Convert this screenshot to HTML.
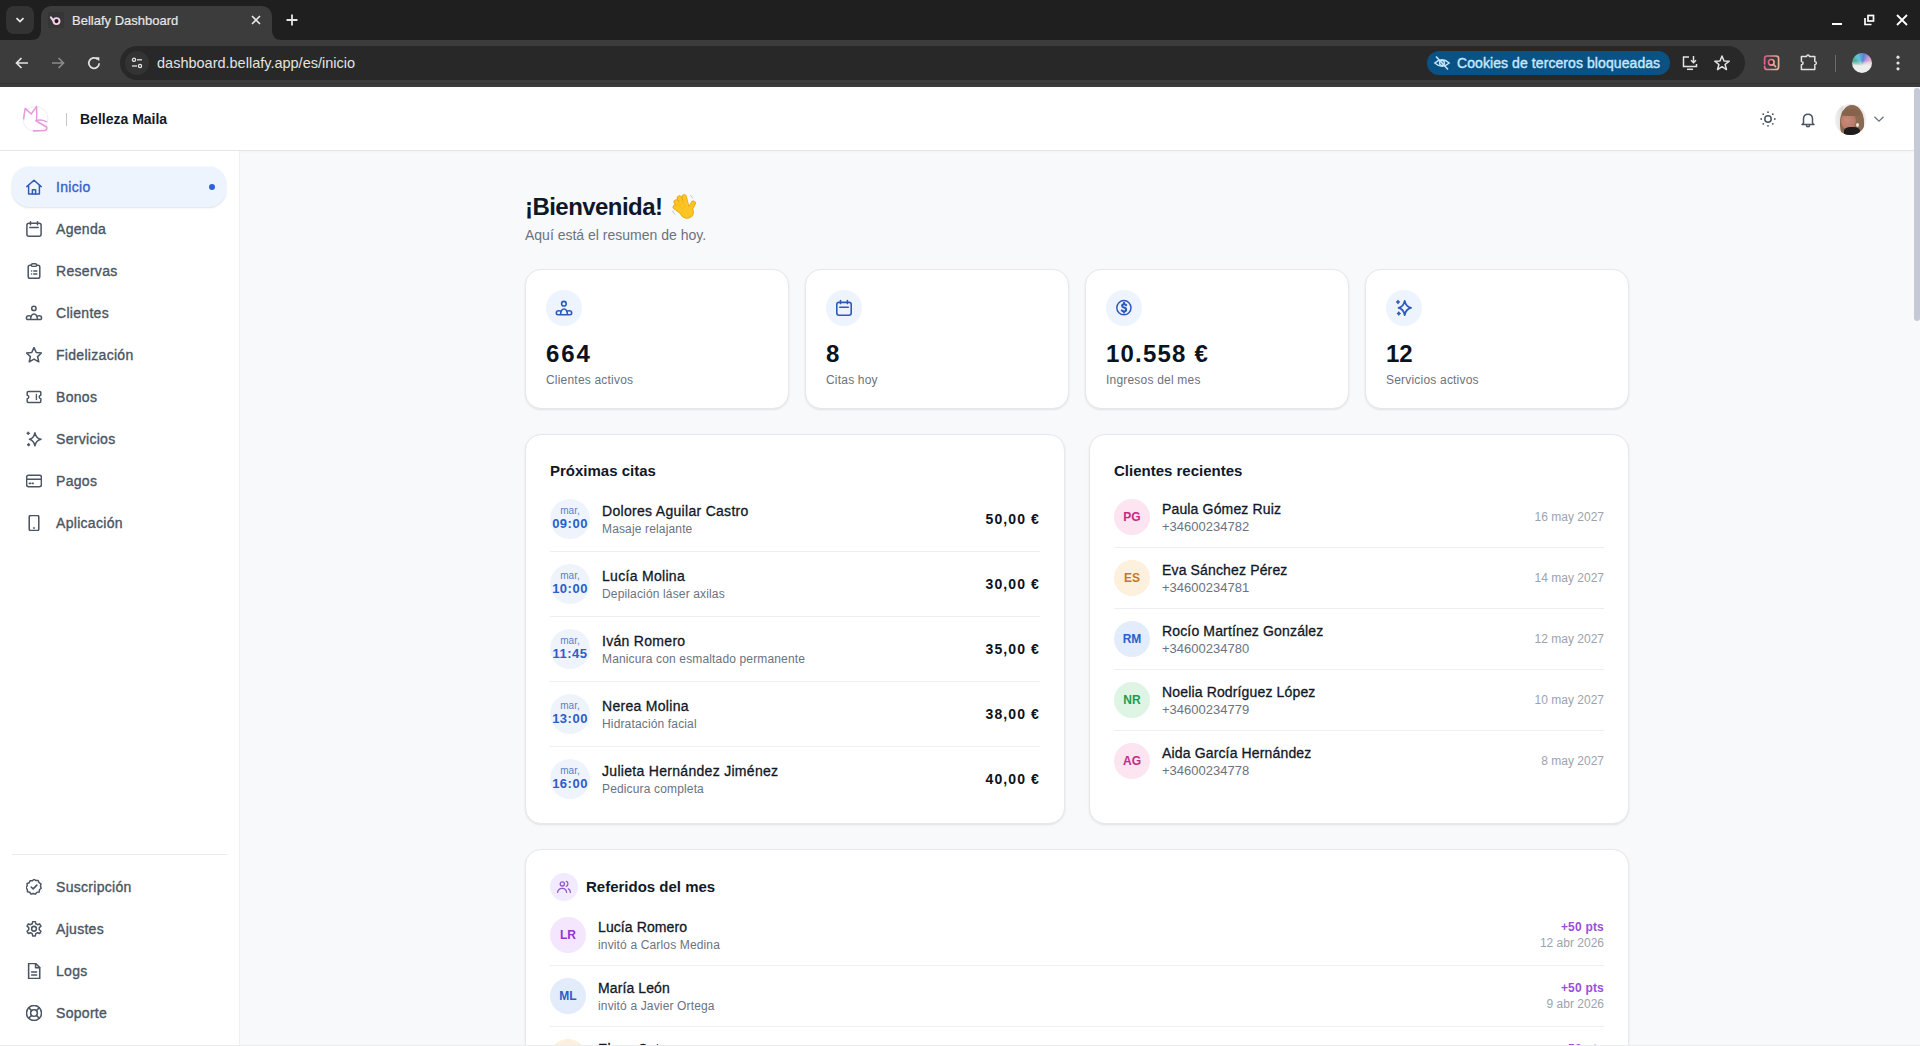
<!DOCTYPE html>
<html><head><meta charset="utf-8"><title>Bellafy Dashboard</title>
<style>
*{box-sizing:border-box;margin:0;padding:0}
html,body{width:1920px;height:1046px;overflow:hidden;background:#f8f9fb;font-family:"Liberation Sans",sans-serif}
.abs{position:absolute}
/* chrome */
#strip{position:absolute;left:0;top:0;width:1920px;height:40px;background:#1f1f1f}
#toolbar{position:absolute;left:0;top:40px;width:1920px;height:47px;background:#3c3c3c}
#tab{position:absolute;left:41px;top:6px;width:231px;height:35px;background:#3c3c3c;border-radius:10px 10px 0 0}
#omni{position:absolute;left:120px;top:46px;width:1625px;height:34px;border-radius:17px;background:#282828}
.ct{color:#e3e3e3;font-family:"Liberation Sans",sans-serif}
/* page */
#page{position:absolute;left:0;top:87px;width:1920px;height:959px;background:#f8f9fb;overflow:hidden}
#header{position:absolute;left:0;top:0;width:1914px;height:64px;background:#fff;border-bottom:1px solid #e4e6ea;box-shadow:0 1px 2px rgba(0,0,0,.03)}
#side{position:absolute;left:0;top:64px;width:240px;height:895px;background:#fff;border-right:1px solid #eceef1}
.nav{position:absolute;left:12px;width:214px;height:40px;border-radius:20px}
.nav .ic{position:absolute;left:14px;top:12px;width:17px;height:17px}
.nav .tx{position:absolute;left:44px;top:12px;font-size:14px;line-height:17px;color:#4b5563;letter-spacing:0.3px;-webkit-text-stroke:0.35px currentColor}
.card{position:absolute;background:#fff;border:1px solid #e6e8ec;border-radius:16px;box-shadow:0 1px 2px rgba(16,24,40,.06),0 1px 3px rgba(16,24,40,.04)}
.tm{-webkit-text-stroke:0.3px currentColor;letter-spacing:0.3px}
#scroll{position:absolute;left:1914px;top:0;width:6px;height:959px;background:#f8f9fb}
#thumb{position:absolute;left:1914px;top:1px;width:6px;height:233px;background:#c6c9d6;border-radius:3px}
</style></head><body>
<div id="strip"></div>
<div id="toolbar"></div>
<div class="abs" style="left:0;top:83px;width:1920px;height:1px;background:#333"></div>
<!-- tab dropdown -->
<div class="abs" style="left:6px;top:6px;width:28px;height:28px;border-radius:8px;background:#333333"></div>
<svg class="abs" style="left:14px;top:14px" width="12" height="12" viewBox="0 0 12 12"><path d="M2.5 4.2 L6 7.6 L9.5 4.2" stroke="#e8e8e8" stroke-width="1.8" fill="none"/></svg>
<!-- tab -->
<div id="tab"></div>
<svg class="abs" style="left:31px;top:30px" width="10" height="10" viewBox="0 0 10 10"><path d="M0 10 Q10 10 10 0 L10 10 Z" fill="#3c3c3c"/></svg>
<svg class="abs" style="left:272px;top:30px" width="10" height="10" viewBox="0 0 10 10"><path d="M10 10 Q0 10 0 0 L0 10 Z" fill="#3c3c3c"/></svg>
<div class="abs" style="left:48px;top:12px;width:16px;height:16px;background:#363636"></div>
<svg class="abs" style="left:48px;top:12px" width="16" height="16" viewBox="0 0 16 16"><path d="M2.9 5.3 L6 9.6" stroke="#f6d6ec" stroke-width="2" stroke-linecap="round"/><circle cx="8.5" cy="9.1" r="3" stroke="#f3d3ea" stroke-width="1.9" fill="#2b1320"/></svg>
<div class="abs ct" style="left:72px;top:13px;font-size:13px;line-height:16px;color:#e6e6e6;-webkit-text-stroke:0.2px #e6e6e6">Bellafy Dashboard</div>
<svg class="abs" style="left:250px;top:14px" width="12" height="12" viewBox="0 0 12 12"><path d="M2 2 L10 10 M10 2 L2 10" stroke="#e6e6e6" stroke-width="1.6"/></svg>
<svg class="abs" style="left:285px;top:13px" width="14" height="14" viewBox="0 0 14 14"><path d="M7 1.5 V12.5 M1.5 7 H12.5" stroke="#e6e6e6" stroke-width="1.8"/></svg>
<!-- nav buttons -->
<svg class="abs" style="left:13px;top:54px" width="18" height="18" viewBox="0 0 18 18"><path d="M15 9 H3.5 M8.5 4 L3.5 9 L8.5 14" stroke="#e3e3e3" stroke-width="1.7" fill="none"/></svg>
<svg class="abs" style="left:49px;top:54px" width="18" height="18" viewBox="0 0 18 18"><path d="M3 9 H14.5 M9.5 4 L14.5 9 L9.5 14" stroke="#8a8a8a" stroke-width="1.7" fill="none"/></svg>
<svg class="abs" style="left:85px;top:54px" width="18" height="18" viewBox="0 0 18 18"><path d="M14.2 9.2 A5.2 5.2 0 1 1 12.6 5.3" stroke="#e3e3e3" stroke-width="1.7" fill="none"/><path d="M10.2 3.2 H14.3 V7.3 Z" fill="#e3e3e3"/></svg>
<div id="omni"></div>
<div class="abs" style="left:125px;top:51px;width:24px;height:24px;border-radius:12px;background:#333"></div>
<svg class="abs" style="left:129px;top:55px" width="16" height="16" viewBox="0 0 16 16"><circle cx="5" cy="4.8" r="1.6" stroke="#e3e3e3" stroke-width="1.3" fill="none"/><path d="M8 4.8 H13" stroke="#e3e3e3" stroke-width="1.3"/><circle cx="11" cy="11" r="1.6" stroke="#e3e3e3" stroke-width="1.3" fill="none"/><path d="M3 11 H8" stroke="#e3e3e3" stroke-width="1.3"/></svg>
<div class="abs ct" style="left:157px;top:55px;font-size:14.5px;line-height:17px;color:#e3e3e3">dashboard.bellafy.app/es/inicio</div>
<!-- cookies chip -->
<div class="abs" style="left:1427px;top:51px;width:243px;height:24px;border-radius:12px;background:#0a5283"></div>
<svg class="abs" style="left:1433px;top:54px" width="18" height="18" viewBox="0 0 18 18"><path d="M1.8 9 Q9 2.5 16.2 9 Q9 15.5 1.8 9 Z" stroke="#c2e4ff" stroke-width="1.5" fill="none"/><circle cx="9" cy="9" r="2.4" stroke="#c2e4ff" stroke-width="1.5" fill="none"/><path d="M3 2.5 L15 15.5" stroke="#c2e4ff" stroke-width="1.6"/></svg>
<div class="abs ct" style="left:1457px;top:55px;font-size:14px;line-height:17px;color:#c7e7ff;-webkit-text-stroke:0.4px #c7e7ff;letter-spacing:0.08px">Cookies de terceros bloqueadas</div>
<svg class="abs" style="left:1681px;top:54px" width="18" height="18" viewBox="0 0 18 18"><path d="M8 3 H2.5 V12.5 H15.5 V10" stroke="#e3e3e3" stroke-width="1.5" fill="none"/><path d="M6 15.3 H12" stroke="#e3e3e3" stroke-width="1.5"/><path d="M12.5 2 V8.5 M10 6.2 L12.5 8.7 L15 6.2" stroke="#e3e3e3" stroke-width="1.5" fill="none"/></svg>
<svg class="abs" style="left:1713px;top:54px" width="18" height="18" viewBox="0 0 18 18"><path d="M9 2 L11 7 L16.2 7.2 L12.1 10.5 L13.5 15.6 L9 12.7 L4.5 15.6 L5.9 10.5 L1.8 7.2 L7 7 Z" stroke="#e3e3e3" stroke-width="1.5" fill="none" stroke-linejoin="round"/></svg>
<!-- extensions -->
<svg class="abs" style="left:1763px;top:54px" width="18" height="18" viewBox="0 0 18 18"><defs><linearGradient id="rg" x1="0" y1="0" x2="1" y2="0.3"><stop offset="0" stop-color="#d85a8a"/><stop offset="1" stop-color="#eab394"/></linearGradient></defs><path d="M1.6 10 V4.5 Q1.6 2 4.1 2 H13 Q15.6 2 15.6 4.5 V13 Q15.6 15.5 13 15.5 H4.1 Q1.6 15.5 1.6 13 V12.3" stroke="url(#rg)" stroke-width="1.7" fill="none" stroke-linecap="round"/><circle cx="8.3" cy="8.3" r="2.8" stroke="url(#rg)" stroke-width="1.6" fill="#3a2a30"/><path d="M10.4 10.4 L12.6 12.6" stroke="#e6a890" stroke-width="1.7" stroke-linecap="round"/></svg>
<svg class="abs" style="left:1800px;top:54px" width="18" height="18" viewBox="0 0 18 18"><path d="M1.4 2.4 H6.6 Q6.9 0.9 8 0.9 Q9.1 0.9 9.4 2.4 H14.8 V7.4 Q16.4 7.7 16.4 9.1 Q16.4 10.5 14.8 10.8 V15.4 H1.4 V10.8 Q3.1 10.5 3.1 9.1 Q3.1 7.7 1.4 7.4 Z" stroke="#e3e3e3" stroke-width="1.5" fill="none" stroke-linejoin="round"/></svg>
<div class="abs" style="left:1835px;top:55px;width:1px;height:17px;background:#6a6a6a"></div>
<div class="abs" style="left:1852px;top:53px;width:20px;height:20px;border-radius:10px;background:linear-gradient(180deg,rgba(240,240,240,0) 38%,rgba(238,238,238,.96) 64%),conic-gradient(from 250deg at 50% 62%,#e8f7ef 0deg,#3f9d72 35deg,#62c6dc 85deg,#5a82d2 120deg,#c49ad8 150deg,#f0c6c6 185deg,#ececec 215deg,#ececec 330deg,#e8f7ef 360deg)"></div>
<svg class="abs" style="left:1889px;top:54px" width="18" height="18" viewBox="0 0 18 18"><circle cx="9" cy="3.2" r="1.6" fill="#e3e3e3"/><circle cx="9" cy="9" r="1.6" fill="#e3e3e3"/><circle cx="9" cy="14.8" r="1.6" fill="#e3e3e3"/></svg>
<!-- window controls -->
<div class="abs" style="left:1832px;top:23px;width:10px;height:2px;background:#fff"></div>
<svg class="abs" style="left:1862px;top:13px" width="14" height="14" viewBox="0 0 14 14"><path d="M3 5 V11.5 H9.5" stroke="#fff" stroke-width="1.7" fill="none"/><rect x="6" y="2.5" width="5.5" height="5.5" stroke="#fff" stroke-width="1.7" fill="none"/></svg>
<svg class="abs" style="left:1895px;top:13px" width="14" height="14" viewBox="0 0 14 14"><path d="M2 2 L12 12 M12 2 L2 12" stroke="#fff" stroke-width="1.8"/></svg>

<div id="page">
  <div id="header">
    <svg class="abs" style="left:20px;top:16px" width="32" height="32" viewBox="0 0 32 32"><circle cx="15.5" cy="16" r="12.5" stroke="#f0ecf1" stroke-width="1" fill="none"/><path d="M3.7 15.8 Q4.3 10 5.2 5.4 L11.2 11 L16.5 3.6 Q16.9 10 16.6 17.2" stroke="#e79ad9" stroke-width="1.5" fill="none" stroke-linecap="round" stroke-linejoin="round"/><path d="M26.3 18.6 Q21 16 15.8 17.7 L26.6 24 Q27.5 27.2 24 27.5 L13.6 27.9" stroke="#e79ad9" stroke-width="1.6" fill="none" stroke-linecap="round" stroke-linejoin="round"/></svg>
    <div class="abs" style="left:65.5px;top:26px;width:1.2px;height:13px;background:#c6c6c6"></div>
    <div class="abs" style="left:80px;top:24px;font-size:14px;line-height:17px;font-weight:bold;color:#111827">Belleza Maila</div>
  </div>
  <div id="side">
<div class="nav" style="top:16px;background:#edf4fd;border-radius:17px;box-shadow:0 1px 2px rgba(20,30,60,.10),0 0 0 1px rgba(20,40,80,.025)"><div class="ic" style="left:14px;top:12px"><svg width="16" height="16" viewBox="0 0 16 16" style="display:block;overflow:visible"><path d="M0.8 7.6 L8 1.2 L15.2 7.6 M2.6 6.2 V15 H13.4 V6.2" stroke="#2f5cb5" stroke-width="1.5" fill="none" stroke-linecap="round" stroke-linejoin="round"/><path d="M6.4 15 V10.8 H9.6 V15" stroke="#2f5cb5" stroke-width="1.5" fill="none" stroke-linecap="round" stroke-linejoin="round"/></svg></div><div class="tx" style="color:#3563c4">Inicio</div><div class="abs" style="left:197px;top:17px;width:6px;height:6px;border-radius:3px;background:#2f62d8"></div></div>
<div class="nav" style="top:58px"><div class="ic"><svg width="16" height="16" viewBox="0 0 16 16" style="display:block;overflow:visible"><rect x="0.9" y="2.3" width="14.2" height="12.9" rx="2" stroke="#4b5563" stroke-width="1.5" fill="none" stroke-linecap="round" stroke-linejoin="round"/><path d="M4.5 0.7 V3.7 M11.5 0.7 V3.7 M3.8 6.6 H12.2" stroke="#4b5563" stroke-width="1.5" fill="none" stroke-linecap="round" stroke-linejoin="round"/></svg></div><div class="tx">Agenda</div></div>
<div class="nav" style="top:100px"><div class="ic"><svg width="16" height="16" viewBox="0 0 16 16" style="display:block;overflow:visible"><rect x="2.2" y="2.2" width="11.6" height="13" rx="1.8" stroke="#4b5563" stroke-width="1.5" fill="none" stroke-linecap="round" stroke-linejoin="round"/><rect x="5.5" y="0.8" width="5" height="2.6" rx="1" stroke="#4b5563" stroke-width="1.4" fill="#fff"/><circle cx="5.6" cy="8" r="0.8" fill="#4b5563"/><circle cx="5.6" cy="11" r="0.8" fill="#4b5563"/><path d="M7.8 8 H10.8 M7.8 11 H10.8" stroke="#4b5563" stroke-width="1.5" fill="none" stroke-linecap="round" stroke-linejoin="round"/></svg></div><div class="tx">Reservas</div></div>
<div class="nav" style="top:142px"><div class="ic"><svg width="16" height="16" viewBox="0 0 16 16" style="display:block;overflow:visible"><circle cx="7.9" cy="3.4" r="2.2" stroke="#4b5563" stroke-width="1.5" fill="none" stroke-linecap="round" stroke-linejoin="round"/><path d="M4.6 11.1 Q3.8 10.8 3 10.8 Q0.4 10.8 0.4 13 Q0.4 14.6 2.3 14.6 H13.7 Q15.6 14.6 15.6 13 Q15.6 10.8 13 10.8 Q12.2 10.8 11.4 11.1 M4.5 14.6 Q5 9 8 9 Q11 9 11.5 14.6" stroke="#4b5563" stroke-width="1.5" fill="none" stroke-linecap="round" stroke-linejoin="round"/></svg></div><div class="tx">Clientes</div></div>
<div class="nav" style="top:184px"><div class="ic"><svg width="16" height="16" viewBox="1.3 1.3 13.4 13.4" style="color:#4b5563;display:block"><path d="M8 1.8 L9.9 5.9 L14.3 6.3 L11 9.3 L12 13.7 L8 11.4 L4 13.7 L5 9.3 L1.7 6.3 L6.1 5.9 Z" stroke="currentColor" stroke-width="1.3" fill="none" stroke-linecap="round" stroke-linejoin="round"/></svg></div><div class="tx">Fidelización</div></div>
<div class="nav" style="top:226px"><div class="ic"><svg width="16" height="16" viewBox="0 0 16 16" style="display:block;overflow:visible"><path d="M1.2 3.6 Q1.2 2.6 2.2 2.6 H13.8 Q14.8 2.6 14.8 3.6 V6.3 Q13.2 6.6 13.2 8 Q13.2 9.4 14.8 9.7 V12.4 Q14.8 13.4 13.8 13.4 H2.2 Q1.2 13.4 1.2 12.4 V9.7 Q2.8 9.4 2.8 8 Q2.8 6.6 1.2 6.3 Z" stroke="#4b5563" stroke-width="1.5" fill="none" stroke-linecap="round" stroke-linejoin="round"/><path d="M10.4 5.4 V6.2 M10.4 7.6 V8.4 M10.4 9.8 V10.6" stroke="#4b5563" stroke-width="1.5" fill="none" stroke-linecap="round" stroke-linejoin="round"/></svg></div><div class="tx">Bonos</div></div>
<div class="nav" style="top:268px"><div class="ic"><svg width="16" height="16" viewBox="0 0 16 16" style="display:block;overflow:visible"><path d="M8.9 1.8 Q10 7.1 15 8.3 Q10 9.5 8.9 14.8 Q7.8 9.5 3.4 8.3 Q7.8 7.1 8.9 1.8 Z" stroke="#4b5563" stroke-width="1.5" fill="none" stroke-linecap="round" stroke-linejoin="round"/><path d="M2.2 0.8 Q2.5 2 3.7 2.3 Q2.5 2.6 2.2 3.8 Q1.9 2.6 0.7 2.3 Q1.9 2 2.2 0.8 Z" stroke="#4b5563" stroke-width="1" fill="#4b5563" stroke-linejoin="round"/><path d="M2.6 12.2 Q2.9 13.4 4.1 13.7 Q2.9 14 2.6 15.2 Q2.3 14 1.1 13.7 Q2.3 13.4 2.6 12.2 Z" stroke="#4b5563" stroke-width="1" fill="#4b5563" stroke-linejoin="round"/></svg></div><div class="tx">Servicios</div></div>
<div class="nav" style="top:310px"><div class="ic"><svg width="16" height="16" viewBox="1.3 1.3 13.4 13.4" style="color:#4b5563;display:block"><rect x="1.8" y="3.2" width="12.4" height="9.6" rx="1.6" stroke="currentColor" stroke-width="1.3" fill="none" stroke-linecap="round" stroke-linejoin="round"/><path d="M1.8 6.5 H14.2 M4.2 10 H5 M6.5 10 H7.3" stroke="currentColor" stroke-width="1.3" fill="none" stroke-linecap="round" stroke-linejoin="round"/></svg></div><div class="tx">Pagos</div></div>
<div class="nav" style="top:352px"><div class="ic"><svg width="16" height="16" viewBox="1.3 1.3 13.4 13.4" style="color:#4b5563;display:block"><rect x="4" y="1.6" width="8" height="12.8" rx="1.4" stroke="currentColor" stroke-width="1.3" fill="none" stroke-linecap="round" stroke-linejoin="round"/><path d="M7.7 12.2 H8.3" stroke="currentColor" stroke-width="1.3" fill="none" stroke-linecap="round" stroke-linejoin="round"/></svg></div><div class="tx">Aplicación</div></div>
<div class="nav" style="top:716px"><div class="ic"><svg width="16" height="16" viewBox="1.3 1.3 13.4 13.4" style="color:#4b5563;display:block"><path d="M8 1.5 L9.6 2.6 L11.5 2.5 L12.2 4.3 L13.8 5.3 L13.4 7.2 L14 9 L12.6 10.3 L12.3 12.2 L10.4 12.5 L9.1 14 L7.3 13.4 L5.5 14 L4.4 12.4 L2.5 12 L2.4 10.1 L1.2 8.6 L2.3 7 L2.2 5.1 L4 4.4 L4.8 2.7 L6.7 2.8 Z" stroke="currentColor" stroke-width="1.25" fill="none" stroke-linejoin="round"/><path d="M5.6 8 L7.3 9.6 L10.4 6.4" stroke="currentColor" stroke-width="1.3" fill="none" stroke-linecap="round" stroke-linejoin="round"/></svg></div><div class="tx">Suscripción</div></div>
<div class="nav" style="top:758px"><div class="ic"><svg width="16" height="16" viewBox="1.3 1.3 13.4 13.4" style="color:#4b5563;display:block"><path d="M6.9 1.8 H9.1 L9.5 3.6 L11 4.4 L12.7 3.7 L13.8 5.6 L12.4 6.8 V8.6 L13.8 9.9 L12.7 11.8 L11 11.1 L9.5 11.9 L9.1 13.8 H6.9 L6.5 11.9 L5 11.1 L3.3 11.8 L2.2 9.9 L3.6 8.6 V6.8 L2.2 5.6 L3.3 3.7 L5 4.4 L6.5 3.6 Z" stroke="currentColor" stroke-width="1.25" fill="none" stroke-linejoin="round"/><circle cx="8" cy="7.8" r="2" stroke="currentColor" stroke-width="1.3" fill="none" stroke-linecap="round" stroke-linejoin="round"/></svg></div><div class="tx">Ajustes</div></div>
<div class="nav" style="top:800px"><div class="ic"><svg width="16" height="16" viewBox="1.3 1.3 13.4 13.4" style="color:#4b5563;display:block"><path d="M3.5 1.8 H9.5 L12.8 5.1 V14.2 H3.5 Z" stroke="currentColor" stroke-width="1.3" fill="none" stroke-linecap="round" stroke-linejoin="round"/><path d="M9.3 1.8 V5.3 H12.8 M6 8.8 H10.2 M6 11.3 H10.2" stroke="currentColor" stroke-width="1.3" fill="none" stroke-linecap="round" stroke-linejoin="round"/></svg></div><div class="tx">Logs</div></div>
<div class="nav" style="top:842px"><div class="ic"><svg width="16" height="16" viewBox="1.3 1.3 13.4 13.4" style="color:#4b5563;display:block"><circle cx="8" cy="8" r="6.3" stroke="currentColor" stroke-width="1.3" fill="none" stroke-linecap="round" stroke-linejoin="round"/><circle cx="8" cy="8" r="2.8" stroke="currentColor" stroke-width="1.3" fill="none" stroke-linecap="round" stroke-linejoin="round"/><path d="M3.6 3.6 L6 6 M12.4 3.6 L10 6 M3.6 12.4 L6 10 M12.4 12.4 L10 10" stroke="currentColor" stroke-width="1.3" fill="none" stroke-linecap="round" stroke-linejoin="round"/></svg></div><div class="tx">Soporte</div></div>
<div class="abs" style="left:12px;top:703px;width:215px;height:1px;background:#e8eaee"></div>
</div>
  <div class="abs" style="left:525px;top:106px;font-size:24px;line-height:28px;font-weight:bold;color:#0f172a;letter-spacing:-0.55px">¡Bienvenida!</div>
  <svg class="abs" style="left:671px;top:106px" width="26" height="26" viewBox="0 0 26 26"><path d="M19.5 2.5 Q21.2 3.3 21.6 5" stroke="#b9c3cf" stroke-width="1" fill="none" stroke-linecap="round"/><path d="M1.8 18 Q2.2 20 3.8 21.2" stroke="#b9c3cf" stroke-width="1" fill="none" stroke-linecap="round"/><path d="M16 15 L13.3 3.8" stroke="#e2a40d" stroke-width="5.2" stroke-linecap="round"/><path d="M14 16 L8.4 5" stroke="#e2a40d" stroke-width="5.2" stroke-linecap="round"/><path d="M12.5 17.5 L5.2 9" stroke="#e2a40d" stroke-width="5.2" stroke-linecap="round"/><path d="M11.5 19.5 L4.3 14" stroke="#e2a40d" stroke-width="5.2" stroke-linecap="round"/><path d="M17.5 19 L22.3 10.2" stroke="#e2a40d" stroke-width="5.2" stroke-linecap="round"/><ellipse cx="16" cy="19.2" rx="6.9" ry="6.6" fill="#e2a40d"/><path d="M16 15 L13.3 3.8" stroke="#fcc523" stroke-width="3.8" stroke-linecap="round"/><path d="M14 16 L8.4 5" stroke="#fcc523" stroke-width="3.8" stroke-linecap="round"/><path d="M12.5 17.5 L5.2 9" stroke="#fcc523" stroke-width="3.8" stroke-linecap="round"/><path d="M11.5 19.5 L4.3 14" stroke="#fcc523" stroke-width="3.8" stroke-linecap="round"/><path d="M17.5 19 L22.3 10.2" stroke="#fcc523" stroke-width="3.8" stroke-linecap="round"/><ellipse cx="16" cy="19.2" rx="6.2" ry="5.9" fill="#fcc523"/><path d="M10 7 L14.5 14 M6.5 10.5 L12 16.5" stroke="#eab020" stroke-width="0.6"/></svg>
  <div class="abs" style="left:525px;top:140px;font-size:14px;line-height:17px;color:#6b7280">Aquí está el resumen de hoy.</div>
  <div class="card" style="left:525px;top:182px;width:264px;height:140px"></div>
  <div class="abs" style="left:546px;top:203px;width:36px;height:36px;border-radius:18px;background:#eef4fd"></div>
  <div class="abs" style="left:556px;top:213px"><svg width="16" height="16" viewBox="0 0 16 16" style="display:block;overflow:visible"><circle cx="7.9" cy="3.7" r="2.3" stroke="#2d5bb9" stroke-width="1.6" fill="none" stroke-linecap="round" stroke-linejoin="round"/><path d="M4.6 11.1 Q3.8 10.8 3 10.8 Q0.3 10.8 0.3 13 Q0.3 14.7 2.3 14.7 H13.7 Q15.7 14.7 15.7 13 Q15.7 10.8 13 10.8 Q12.2 10.8 11.4 11.1 M4.5 14.7 Q5 9 8 9 Q11 9 11.5 14.7" stroke="#2d5bb9" stroke-width="1.6" fill="none" stroke-linecap="round" stroke-linejoin="round"/></svg></div>
  <div class="abs" style="left:546px;top:253px;font-size:24px;line-height:28px;font-weight:bold;color:#0b1220;letter-spacing:1.9px">664</div>
  <div class="abs" style="left:546px;top:286px;font-size:12px;line-height:15px;color:#6b7280;letter-spacing:0.2px">Clientes activos</div>
  <div class="card" style="left:805px;top:182px;width:264px;height:140px"></div>
  <div class="abs" style="left:826px;top:203px;width:36px;height:36px;border-radius:18px;background:#eef4fd"></div>
  <div class="abs" style="left:836px;top:213px"><svg width="16" height="16" viewBox="0 0 16 16" style="display:block;overflow:visible"><rect x="0.8" y="2.4" width="14.4" height="12.8" rx="2.2" stroke="#2d5bb9" stroke-width="1.6" fill="none" stroke-linecap="round" stroke-linejoin="round"/><path d="M4.5 0.6 V3.6 M11.4 0.6 V3.6 M3.8 7.3 H12.3" stroke="#2d5bb9" stroke-width="1.6" fill="none" stroke-linecap="round" stroke-linejoin="round"/></svg></div>
  <div class="abs" style="left:826px;top:253px;font-size:24px;line-height:28px;font-weight:bold;color:#0b1220;letter-spacing:1.5px">8</div>
  <div class="abs" style="left:826px;top:286px;font-size:12px;line-height:15px;color:#6b7280;letter-spacing:0.2px">Citas hoy</div>
  <div class="card" style="left:1085px;top:182px;width:264px;height:140px"></div>
  <div class="abs" style="left:1106px;top:203px;width:36px;height:36px;border-radius:18px;background:#eef4fd"></div>
  <div class="abs" style="left:1116px;top:213px"><svg width="16" height="16" viewBox="0 0 16 16" style="display:block;overflow:visible"><circle cx="7.9" cy="7.7" r="7.1" stroke="#2d5bb9" stroke-width="1.5" fill="none"/><path d="M10.2 5.2 Q9.5 4.2 8 4.2 Q6.1 4.2 6.1 5.8 Q6.1 7.1 8 7.5 Q10.1 7.9 10.1 9.8 Q10.1 11.4 8 11.4 Q6.5 11.4 5.8 10.4 M8 2.8 V4 M8 11.6 V12.6" stroke="#2d5bb9" stroke-width="2.1" fill="none" stroke-linecap="round"/></svg></div>
  <div class="abs" style="left:1106px;top:253px;font-size:24px;line-height:28px;font-weight:bold;color:#0b1220;letter-spacing:1.2px">10.558 €</div>
  <div class="abs" style="left:1106px;top:286px;font-size:12px;line-height:15px;color:#6b7280;letter-spacing:0.2px">Ingresos del mes</div>
  <div class="card" style="left:1365px;top:182px;width:264px;height:140px"></div>
  <div class="abs" style="left:1386px;top:203px;width:36px;height:36px;border-radius:18px;background:#eef4fd"></div>
  <div class="abs" style="left:1396px;top:213px"><svg width="16" height="16" viewBox="0 0 16 16" style="display:block;overflow:visible"><path d="M8.7 0.9 Q9.9 6.7 15 7.9 Q9.9 9.1 8.7 15 Q7.5 9.1 2.6 7.9 Q7.5 6.7 8.7 0.9 Z" stroke="#2d5bb9" stroke-width="1.8" fill="none" stroke-linecap="round" stroke-linejoin="round"/><path d="M2 0.4 Q2.3 1.7 3.6 2 Q2.3 2.3 2 3.6 Q1.7 2.3 0.4 2 Q1.7 1.7 2 0.4 Z" stroke="#2d5bb9" stroke-width="1.1" fill="#2d5bb9" stroke-linejoin="round"/><path d="M2.8 11.9 Q3.1 13.2 4.4 13.5 Q3.1 13.8 2.8 15.1 Q2.5 13.8 1.2 13.5 Q2.5 13.2 2.8 11.9 Z" stroke="#2d5bb9" stroke-width="1.1" fill="#2d5bb9" stroke-linejoin="round"/></svg></div>
  <div class="abs" style="left:1386px;top:253px;font-size:24px;line-height:28px;font-weight:bold;color:#0b1220;letter-spacing:0px">12</div>
  <div class="abs" style="left:1386px;top:286px;font-size:12px;line-height:15px;color:#6b7280;letter-spacing:0.2px">Servicios activos</div>
  <div class="card" style="left:525px;top:347px;width:540px;height:390px"></div>
  <div class="card" style="left:1089px;top:347px;width:540px;height:390px"></div>
  <div class="abs" style="left:550px;top:375px;font-size:15px;line-height:18px;font-weight:bold;color:#111827">Próximas citas</div>
  <div class="abs" style="left:1114px;top:375px;font-size:15px;line-height:18px;font-weight:bold;color:#111827">Clientes recientes</div>
  <div class="abs" style="left:550px;top:412px;width:40px;height:40px;border-radius:20px;background:#eff4fc"></div>
  <div class="abs" style="left:550px;top:418px;width:40px;text-align:center;font-size:10px;line-height:12px;color:#5a7fc9">mar,</div>
  <div class="abs" style="left:550px;top:429px;width:40px;text-align:center;font-size:13px;line-height:15px;font-weight:bold;color:#2c5dc8;letter-spacing:0.5px">09:00</div>
  <div class="abs tm" style="left:602px;top:416px;font-size:14px;line-height:17px;color:#111827">Dolores Aguilar Castro</div>
  <div class="abs" style="left:602px;top:435px;font-size:12px;line-height:15px;color:#6b7280;letter-spacing:0.15px">Masaje relajante</div>
  <div class="abs" style="left:840px;top:424px;width:200px;text-align:right;font-size:14px;line-height:17px;font-weight:bold;color:#0b1220;letter-spacing:1.1px">50,00 €</div>
  <div class="abs" style="left:550px;top:464px;width:490px;height:1px;background:#eceef2"></div>
  <div class="abs" style="left:550px;top:477px;width:40px;height:40px;border-radius:20px;background:#eff4fc"></div>
  <div class="abs" style="left:550px;top:483px;width:40px;text-align:center;font-size:10px;line-height:12px;color:#5a7fc9">mar,</div>
  <div class="abs" style="left:550px;top:494px;width:40px;text-align:center;font-size:13px;line-height:15px;font-weight:bold;color:#2c5dc8;letter-spacing:0.5px">10:00</div>
  <div class="abs tm" style="left:602px;top:481px;font-size:14px;line-height:17px;color:#111827">Lucía Molina</div>
  <div class="abs" style="left:602px;top:500px;font-size:12px;line-height:15px;color:#6b7280;letter-spacing:0.15px">Depilación láser axilas</div>
  <div class="abs" style="left:840px;top:489px;width:200px;text-align:right;font-size:14px;line-height:17px;font-weight:bold;color:#0b1220;letter-spacing:1.1px">30,00 €</div>
  <div class="abs" style="left:550px;top:529px;width:490px;height:1px;background:#eceef2"></div>
  <div class="abs" style="left:550px;top:542px;width:40px;height:40px;border-radius:20px;background:#eff4fc"></div>
  <div class="abs" style="left:550px;top:548px;width:40px;text-align:center;font-size:10px;line-height:12px;color:#5a7fc9">mar,</div>
  <div class="abs" style="left:550px;top:559px;width:40px;text-align:center;font-size:13px;line-height:15px;font-weight:bold;color:#2c5dc8;letter-spacing:0.5px">11:45</div>
  <div class="abs tm" style="left:602px;top:546px;font-size:14px;line-height:17px;color:#111827">Iván Romero</div>
  <div class="abs" style="left:602px;top:565px;font-size:12px;line-height:15px;color:#6b7280;letter-spacing:0.15px">Manicura con esmaltado permanente</div>
  <div class="abs" style="left:840px;top:554px;width:200px;text-align:right;font-size:14px;line-height:17px;font-weight:bold;color:#0b1220;letter-spacing:1.1px">35,00 €</div>
  <div class="abs" style="left:550px;top:594px;width:490px;height:1px;background:#eceef2"></div>
  <div class="abs" style="left:550px;top:607px;width:40px;height:40px;border-radius:20px;background:#eff4fc"></div>
  <div class="abs" style="left:550px;top:613px;width:40px;text-align:center;font-size:10px;line-height:12px;color:#5a7fc9">mar,</div>
  <div class="abs" style="left:550px;top:624px;width:40px;text-align:center;font-size:13px;line-height:15px;font-weight:bold;color:#2c5dc8;letter-spacing:0.5px">13:00</div>
  <div class="abs tm" style="left:602px;top:611px;font-size:14px;line-height:17px;color:#111827">Nerea Molina</div>
  <div class="abs" style="left:602px;top:630px;font-size:12px;line-height:15px;color:#6b7280;letter-spacing:0.15px">Hidratación facial</div>
  <div class="abs" style="left:840px;top:619px;width:200px;text-align:right;font-size:14px;line-height:17px;font-weight:bold;color:#0b1220;letter-spacing:1.1px">38,00 €</div>
  <div class="abs" style="left:550px;top:659px;width:490px;height:1px;background:#eceef2"></div>
  <div class="abs" style="left:550px;top:672px;width:40px;height:40px;border-radius:20px;background:#eff4fc"></div>
  <div class="abs" style="left:550px;top:678px;width:40px;text-align:center;font-size:10px;line-height:12px;color:#5a7fc9">mar,</div>
  <div class="abs" style="left:550px;top:689px;width:40px;text-align:center;font-size:13px;line-height:15px;font-weight:bold;color:#2c5dc8;letter-spacing:0.5px">16:00</div>
  <div class="abs tm" style="left:602px;top:676px;font-size:14px;line-height:17px;color:#111827">Julieta Hernández Jiménez</div>
  <div class="abs" style="left:602px;top:695px;font-size:12px;line-height:15px;color:#6b7280;letter-spacing:0.15px">Pedicura completa</div>
  <div class="abs" style="left:840px;top:684px;width:200px;text-align:right;font-size:14px;line-height:17px;font-weight:bold;color:#0b1220;letter-spacing:1.1px">40,00 €</div>
  <div class="abs" style="left:1114px;top:412px;width:36px;height:36px;border-radius:18px;background:#fce4f1;color:#c52a82;text-align:center;font-size:12px;line-height:36px;font-weight:bold">PG</div>
  <div class="abs tm" style="left:1162px;top:414px;letter-spacing:0.15px;font-size:14px;line-height:17px;color:#111827">Paula Gómez Ruiz</div>
  <div class="abs" style="left:1162px;top:432px;font-size:13px;line-height:15px;color:#6b7280">+34600234782</div>
  <div class="abs" style="left:1404px;top:423px;width:200px;text-align:right;font-size:12px;line-height:15px;color:#9ca3af">16 may 2027</div>
  <div class="abs" style="left:1114px;top:460px;width:490px;height:1px;background:#eceef2"></div>
  <div class="abs" style="left:1114px;top:473px;width:36px;height:36px;border-radius:18px;background:#fdf0dc;color:#c7791a;text-align:center;font-size:12px;line-height:36px;font-weight:bold">ES</div>
  <div class="abs tm" style="left:1162px;top:475px;letter-spacing:0.15px;font-size:14px;line-height:17px;color:#111827">Eva Sánchez Pérez</div>
  <div class="abs" style="left:1162px;top:493px;font-size:13px;line-height:15px;color:#6b7280">+34600234781</div>
  <div class="abs" style="left:1404px;top:484px;width:200px;text-align:right;font-size:12px;line-height:15px;color:#9ca3af">14 may 2027</div>
  <div class="abs" style="left:1114px;top:521px;width:490px;height:1px;background:#eceef2"></div>
  <div class="abs" style="left:1114px;top:534px;width:36px;height:36px;border-radius:18px;background:#e3ecfb;color:#2a5fc9;text-align:center;font-size:12px;line-height:36px;font-weight:bold">RM</div>
  <div class="abs tm" style="left:1162px;top:536px;letter-spacing:0.15px;font-size:14px;line-height:17px;color:#111827">Rocío Martínez González</div>
  <div class="abs" style="left:1162px;top:554px;font-size:13px;line-height:15px;color:#6b7280">+34600234780</div>
  <div class="abs" style="left:1404px;top:545px;width:200px;text-align:right;font-size:12px;line-height:15px;color:#9ca3af">12 may 2027</div>
  <div class="abs" style="left:1114px;top:582px;width:490px;height:1px;background:#eceef2"></div>
  <div class="abs" style="left:1114px;top:595px;width:36px;height:36px;border-radius:18px;background:#def5e6;color:#1f9a4e;text-align:center;font-size:12px;line-height:36px;font-weight:bold">NR</div>
  <div class="abs tm" style="left:1162px;top:597px;letter-spacing:0.15px;font-size:14px;line-height:17px;color:#111827">Noelia Rodríguez López</div>
  <div class="abs" style="left:1162px;top:615px;font-size:13px;line-height:15px;color:#6b7280">+34600234779</div>
  <div class="abs" style="left:1404px;top:606px;width:200px;text-align:right;font-size:12px;line-height:15px;color:#9ca3af">10 may 2027</div>
  <div class="abs" style="left:1114px;top:643px;width:490px;height:1px;background:#eceef2"></div>
  <div class="abs" style="left:1114px;top:656px;width:36px;height:36px;border-radius:18px;background:#fce4f1;color:#c52a82;text-align:center;font-size:12px;line-height:36px;font-weight:bold">AG</div>
  <div class="abs tm" style="left:1162px;top:658px;letter-spacing:0.15px;font-size:14px;line-height:17px;color:#111827">Aida García Hernández</div>
  <div class="abs" style="left:1162px;top:676px;font-size:13px;line-height:15px;color:#6b7280">+34600234778</div>
  <div class="abs" style="left:1404px;top:667px;width:200px;text-align:right;font-size:12px;line-height:15px;color:#9ca3af">8 may 2027</div>
  <div class="card" style="left:525px;top:762px;width:1104px;height:400px"></div>
  <div class="abs" style="left:550px;top:786px;width:28px;height:28px;border-radius:14px;background:#f2eafd"></div>
  <div class="abs" style="left:555px;top:791px"><svg width="18" height="18" viewBox="0 0 18 18" style="display:block"><circle cx="7.3" cy="5.9" r="2.1" stroke="#8f58cc" stroke-width="1.3" fill="none" stroke-linecap="round"/><path d="M2.6 14.4 Q3 10.3 7.3 10.3 Q11.2 10.3 11.6 14.4" stroke="#8f58cc" stroke-width="1.3" fill="none" stroke-linecap="round"/><path d="M11.3 3.4 Q12.9 3.9 12.9 5.8 Q12.9 7.6 11.3 8.3" stroke="#8f58cc" stroke-width="1.3" fill="none" stroke-linecap="round"/><path d="M13.4 10.9 Q15.2 11.8 15.4 14.4" stroke="#8f58cc" stroke-width="1.3" fill="none" stroke-linecap="round"/></svg></div>
  <div class="abs" style="left:586px;top:791px;font-size:15px;line-height:18px;font-weight:bold;color:#111827">Referidos del mes</div>
  <div class="abs" style="left:550px;top:830px;width:36px;height:36px;border-radius:18px;background:#f4e6fd;color:#8f37cf;text-align:center;font-size:12px;line-height:36px;font-weight:bold">LR</div>
  <div class="abs tm" style="left:598px;top:832px;letter-spacing:0.1px;font-size:14px;line-height:17px;color:#111827">Lucía Romero</div>
  <div class="abs" style="left:598px;top:851px;font-size:12px;line-height:15px;color:#6b7280;letter-spacing:0.15px">invitó a Carlos Medina</div>
  <div class="abs" style="left:1404px;top:833px;width:200px;text-align:right;font-size:12px;line-height:15px;font-weight:bold;color:#9a4fd8;letter-spacing:0.2px">+50 pts</div>
  <div class="abs" style="left:1404px;top:849px;width:200px;text-align:right;font-size:12px;line-height:15px;color:#9ca3af">12 abr 2026</div>
  <div class="abs" style="left:550px;top:878px;width:1054px;height:1px;background:#eceef2"></div>
  <div class="abs" style="left:550px;top:891px;width:36px;height:36px;border-radius:18px;background:#e3ecfb;color:#2a5fc9;text-align:center;font-size:12px;line-height:36px;font-weight:bold">ML</div>
  <div class="abs tm" style="left:598px;top:893px;letter-spacing:0.1px;font-size:14px;line-height:17px;color:#111827">María León</div>
  <div class="abs" style="left:598px;top:912px;font-size:12px;line-height:15px;color:#6b7280;letter-spacing:0.15px">invitó a Javier Ortega</div>
  <div class="abs" style="left:1404px;top:894px;width:200px;text-align:right;font-size:12px;line-height:15px;font-weight:bold;color:#9a4fd8;letter-spacing:0.2px">+50 pts</div>
  <div class="abs" style="left:1404px;top:910px;width:200px;text-align:right;font-size:12px;line-height:15px;color:#9ca3af">9 abr 2026</div>
  <div class="abs" style="left:550px;top:939px;width:1054px;height:1px;background:#eceef2"></div>
  <div class="abs" style="left:550px;top:952px;width:36px;height:36px;border-radius:18px;background:#fdf0dc;color:#c7791a;text-align:center;font-size:12px;line-height:36px;font-weight:bold">EO</div>
  <div class="abs tm" style="left:598px;top:954px;letter-spacing:0.1px;font-size:14px;line-height:17px;color:#111827">Elena Soto</div>
  <div class="abs" style="left:598px;top:973px;font-size:12px;line-height:15px;color:#6b7280;letter-spacing:0.15px">invitó a Pablo Gil</div>
  <div class="abs" style="left:1404px;top:955px;width:200px;text-align:right;font-size:12px;line-height:15px;font-weight:bold;color:#9a4fd8;letter-spacing:0.2px">+50 pts</div>
  <div class="abs" style="left:1404px;top:971px;width:200px;text-align:right;font-size:12px;line-height:15px;color:#9ca3af">7 abr 2026</div>
  <div class="abs" style="left:1760px;top:24px"><svg width="16" height="16" viewBox="0 0 16 16" style="display:block"><circle cx="8" cy="8" r="3.2" stroke="#4b5563" stroke-width="1.5" fill="none"/><g fill="#4b5563"><circle cx="8" cy="1.2" r="0.9"/><circle cx="8" cy="14.8" r="0.9"/><circle cx="1.2" cy="8" r="0.9"/><circle cx="14.8" cy="8" r="0.9"/><circle cx="3.2" cy="3.2" r="0.9"/><circle cx="12.8" cy="3.2" r="0.9"/><circle cx="3.2" cy="12.8" r="0.9"/><circle cx="12.8" cy="12.8" r="0.9"/></g></svg></div>
  <div class="abs" style="left:1800px;top:25px"><svg width="16" height="16" viewBox="0 0 16 16" style="display:block"><path d="M3.5 11.2 V7 Q3.5 2.2 8 2.2 Q12.5 2.2 12.5 7 V11.2 L14 12.6 H2 Z" stroke="#4b5563" stroke-width="1.5" fill="none" stroke-linejoin="round"/><path d="M6.3 13.2 Q6.5 14.8 8 14.8 Q9.5 14.8 9.7 13.2" stroke="#4b5563" stroke-width="1.5" fill="none"/></svg></div>
  <div class="abs" style="left:1834.5px;top:17px;width:31px;height:31px;border-radius:50%;overflow:hidden;background:#ecebec">
<div class="abs" style="left:0;top:0;width:8px;height:31px;background:linear-gradient(90deg,#f3f3f3,#d9d9db)"></div>
<div class="abs" style="left:5px;top:1px;width:24px;height:34px;border-radius:50% 50% 40% 40%;background:#8a6a52"></div>
<div class="abs" style="left:6px;top:9px;width:15px;height:17px;border-radius:45% 45% 50% 50%;background:radial-gradient(circle at 40% 45%,#c98a7c 0,#b87a68 60%,#9a6650 100%)"></div>
<div class="abs" style="left:7px;top:5px;width:18px;height:7px;border-radius:50% 50% 30% 30%;background:#86634a"></div>
<div class="abs" style="left:9px;top:23px;width:16px;height:10px;border-radius:40% 40% 0 0;background:#1f1c1d"></div>
<div class="abs" style="left:21px;top:19px;width:3px;height:4px;border-radius:50%;background:#f2e2d8"></div>
</div>
  <div class="abs" style="left:1873px;top:28px"><svg width="12" height="8" viewBox="0 0 12 8" style="display:block"><path d="M1.5 1.8 L6 6.2 L10.5 1.8" stroke="#6b7280" stroke-width="1.3" fill="none"/></svg></div>
  <div id="scroll"></div><div id="thumb"></div>
</div>
<div class="abs" style="left:0;top:1045px;width:1920px;height:1px;background:#ebecef"></div>
</body></html>
